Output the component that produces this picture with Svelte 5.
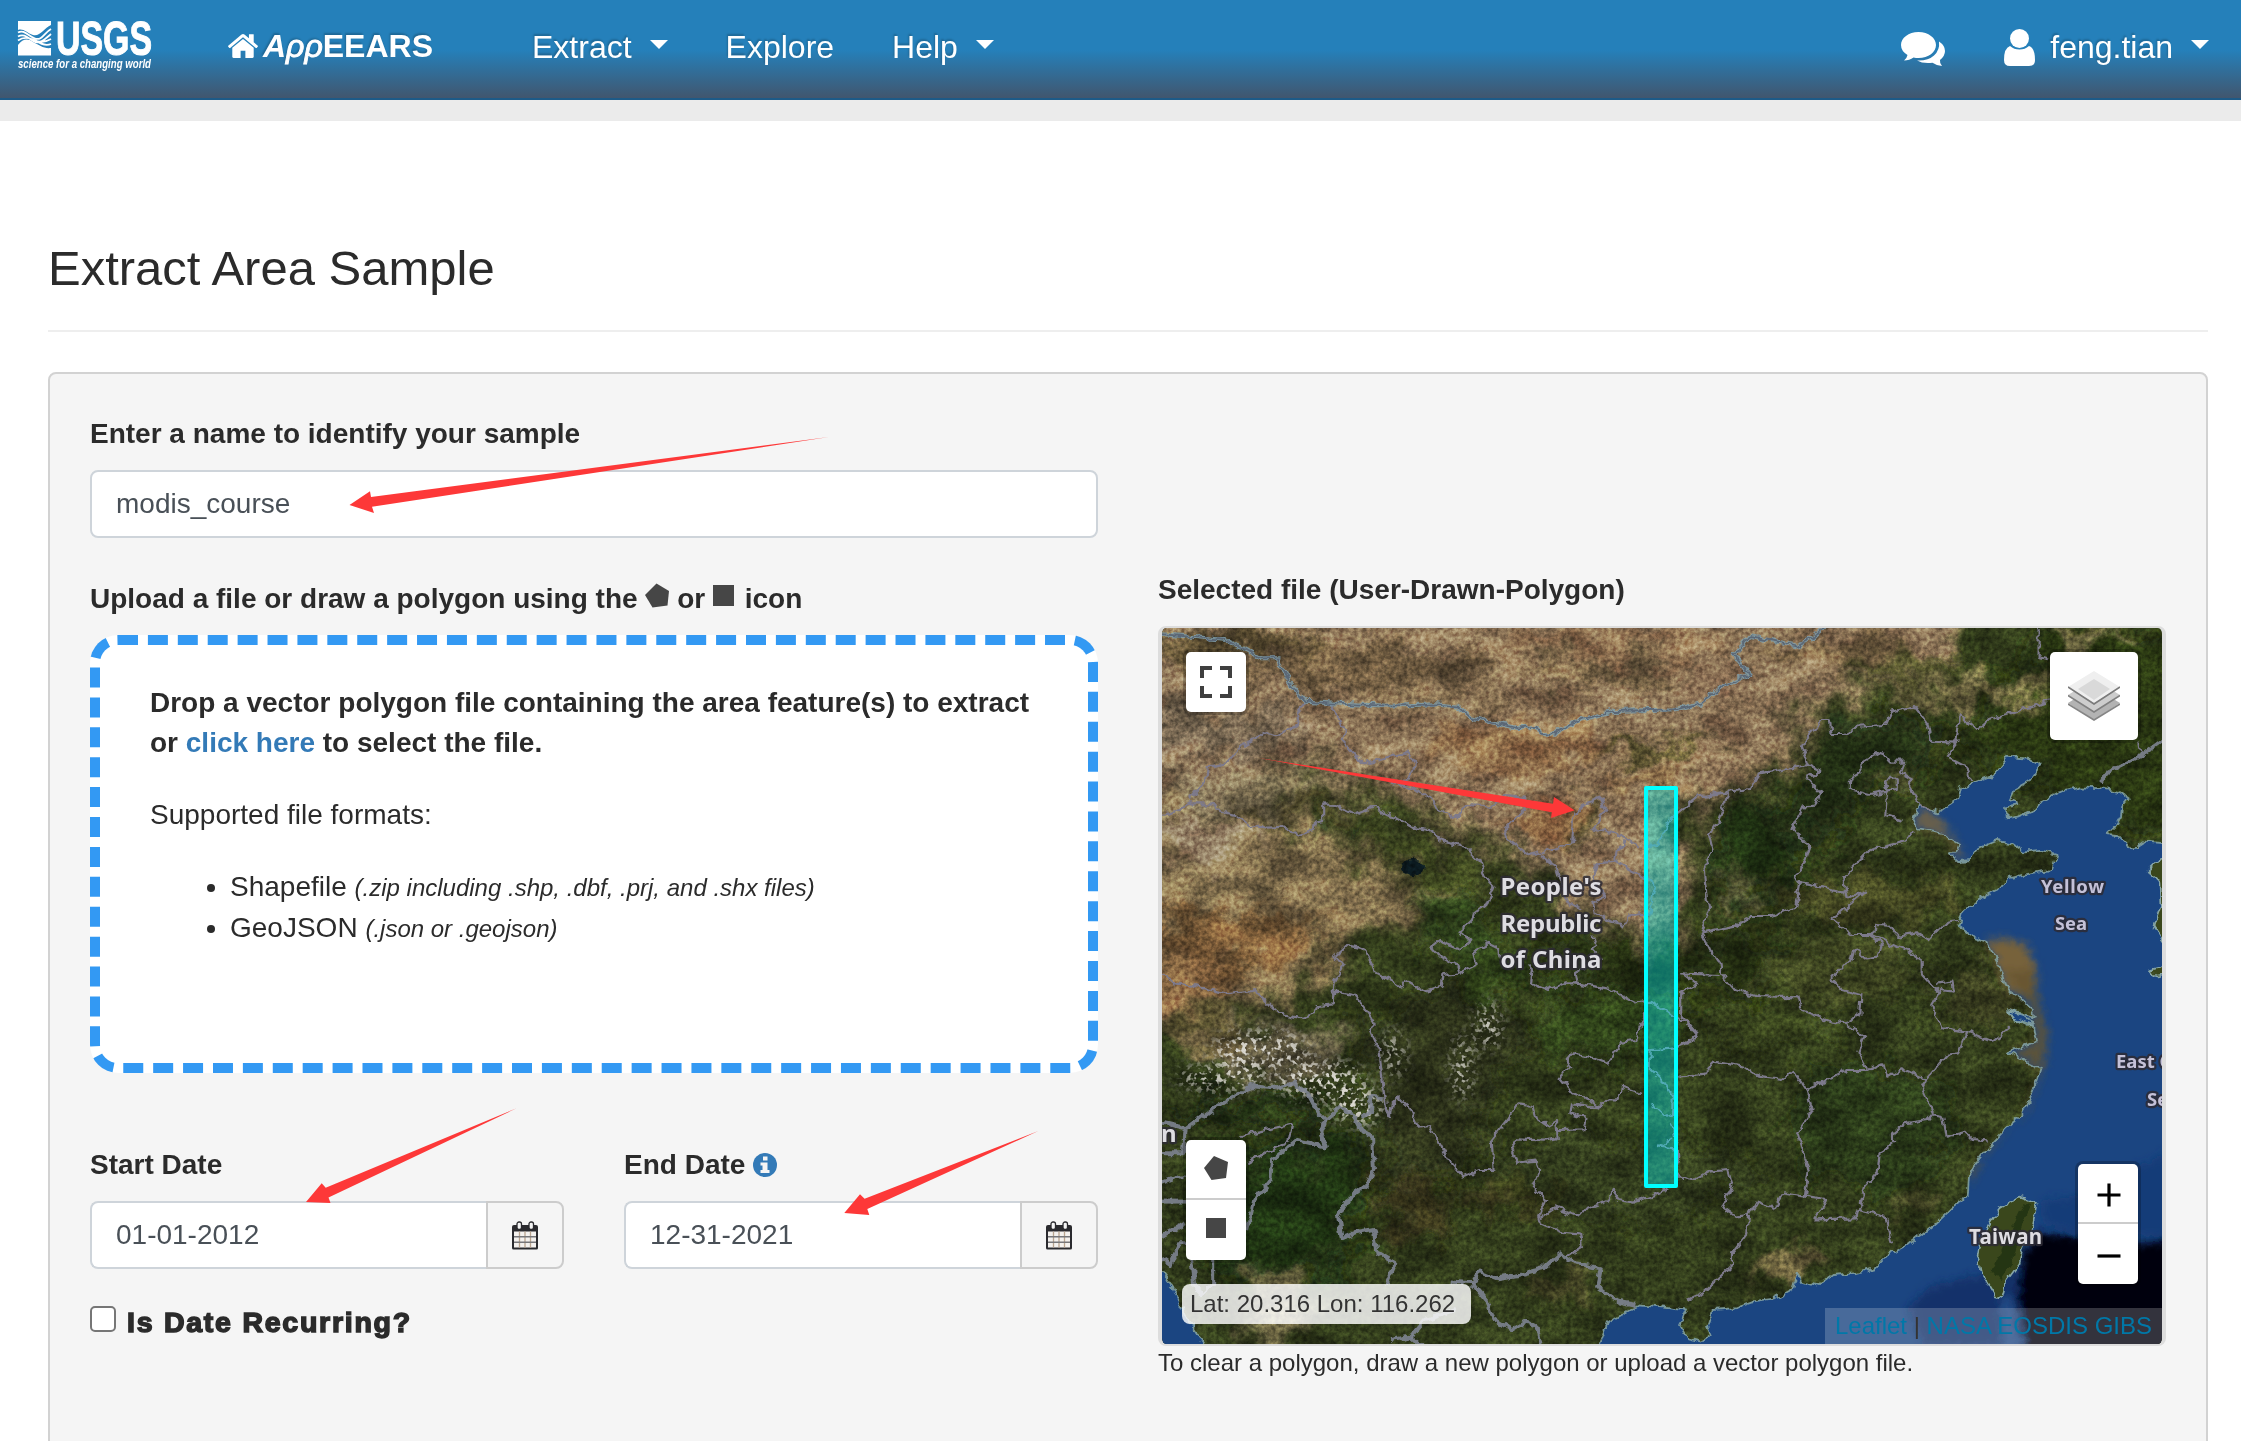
<script>
  // Converts "x,y x,y ..." survey points of one map sheet into map pixels.
  const sheet = (ox, oy, sx, sy) => (pts) =>
    pts
      .trim()
      .split(/\s+/)
      .map((p) => p.split(',').map(Number))
      .map(([x, y]) => `${(ox + x * sx).toFixed(1)},${(oy + y * sy).toFixed(1)}`)
      .join(' ');

  const nw = sheet(-22, -68, 0.3571, 0.3333);
  const ne = sheet(478, -68, 0.3833, 0.3333);
  const sw = sheet(-22, 342, 0.3571, 0.3333);
  const se = sheet(478, 342, 0.3833, 0.3333);
  const all = sheet(-12, -13, 0.6505, 0.4719);

  // Mainland coast, from Korea round to the Gulf of Tonkin.
  const coast = [
    ne('1370,850 1320,845 1300,860 1275,862 1245,825 1220,822 1240,800 1255,770 1258,740 1275,715 1250,695 1205,685 1150,682 1090,697 1050,722 1030,748 985,770 957,775 955,742 990,735 965,715 975,690 1015,665 1043,618 1015,597 960,590 925,645 870,668 838,685 830,715 780,757 728,735 712,780 725,808 790,822 833,855 828,870 808,880 830,903 862,900 885,865 930,843 970,850 1000,875 1045,870 1087,882 1075,930 1040,935 960,955 940,985 890,1012 845,1055 830,1097 870,1130 905,1145 935,1215 955,1280'),
    se('965,65 990,85 1025,120 1030,140 960,120 975,145 1025,165 1033,215 960,245 1000,270 1045,295 1030,350 1015,395 1000,430 960,470 910,530 870,590 858,620 855,680 820,705 775,755 700,825 640,860 610,895 560,910 500,915 460,948 420,935 412,910 400,955 350,985 290,995 240,1015 190,1020 175,1070 185,1095 160,1115 125,1105 105,1060 120,1018 60,1010 0,1003'),
    sw('1380,1015 1310,1060 1285,1135')
  ].join(' ');
  const sea = coast + ' 1010,726';
  const islands = [
    ne('1375,880 1325,935 1355,965 1358,1040 1340,1100 1375,1160'),
    ne('1375,1215 1330,1230 1345,1250 1375,1245'),
    se('990,680 1035,700 1025,760 1000,830 990,880 955,935 945,982 925,975 890,910 880,860 890,800 940,715')
  ];
  const bengal = sw('50,900 90,950 130,1040 165,1100 185,1135 50,1135');
  const shoals = [
    ne('905,1140 960,1135 1005,1155 1032,1210 1035,1290 1005,1310 955,1290'),
    se('950,0 1025,0 1038,90 1062,190 1055,290 1025,370 1005,430 900,540 865,640 862,600 1000,430 1045,295 1000,270 965,245 1033,215 1025,120'),
    ne('735,745 780,765 815,830 845,885 830,900 800,830 730,810 712,780')
  ];

  const provinces = [
    nw('465,430 440,465 445,495 385,525 355,515 290,555 240,610 190,620 185,655 140,720'),
    nw('62,765 100,755 140,730 200,730 215,750 270,765 310,798 360,803 400,800 445,825 485,810 490,785 513,780 513,733 545,735 600,765 655,742 700,765 760,803 810,810 850,845 910,860 950,900 965,950 990,980 970,1035 935,1060 930,1080 895,1115 925,1145 900,1170 835,1143 815,1160 840,1190 890,1220 895,1240 940,1215 930,1175 975,1150 1005,1165 1010,1195'),
    nw('530,430 575,510 565,540 625,610 680,595 750,578 770,610 765,635 740,665 700,668 770,685 820,720 830,745 885,775 915,735 990,740 1020,705 1075,710 1080,745 1020,810 1025,835 1090,885 1150,870 1210,850 1215,775 1240,735 1290,715 1305,750 1270,805 1320,815 1400,860'),
    nw('1120,885 1165,920 1175,960 1200,1030 1235,1045'),
    nw('1360,845 1335,870 1330,905 1280,910 1265,960 1305,1010 1265,1030 1270,1060 1310,1080 1355,1097 1370,1065 1435,1060 1430,1020 1445,980 1425,960 1390,940 1330,908'),
    nw('1270,1130 1280,1160 1265,1170 1290,1195 1220,1240 1225,1270'),
    nw('62,1240 100,1270 160,1280 240,1300 320,1290 390,1360 450,1375'),
    nw('540,1320 545,1270 570,1220 545,1190 580,1155 625,1165 660,1235 735,1280 745,1260 800,1295 845,1280 850,1245 895,1240'),
    sw('450,145 490,130 500,105 540,100 548,65 600,75 640,130 660,165 645,180 670,240 682,360 690,420 700,440 705,405 725,385 760,420 780,470 810,465 865,570 905,620 950,600 990,600 985,510 1030,450 1060,400 1100,405 1105,440 1140,465 1165,450 1170,505 1130,512 1060,508 1040,540 1055,578 1110,572 1120,600 1100,655 1135,690 1115,740 1120,760 1175,785 1235,790 1240,830 1195,860'),
    sw('1090,-10 1100,0 1095,40 1140,60 1190,40 1220,40 1310,55 1385,97 1430,92 1490,135 1530,155 1560,195 1500,235 1430,240 1430,300 1470,340 1492,380 1490,430 1470,440 1430,400'),
    sw('1415,130 1390,210 1350,215 1310,278 1270,262 1210,250 1195,270 1205,290 1175,325 1210,370 1260,390 1285,412 1310,385 1340,385 1350,350 1400,368'),
    sw('1285,412 1210,400 1205,430 1250,445 1245,478 1170,480'),
    sw('1120,745 1165,712 1230,740 1250,715 1310,690 1325,660 1345,690 1380,698 1440,675 1480,655'),
    sw('1490,460 1510,560 1500,600 1520,635'),
    sw('1490,505 1455,530 1500,535'),
    sw('280,500 430,460 420,510 300,580'),
    ne('10,860 45,855 80,780 150,710 210,700 285,690 310,640 370,630 440,615 425,565 430,535 475,480 495,480 500,522 530,522 570,500 640,495 655,455 715,438 750,490 760,545 825,548 835,465 880,510 910,480 1020,440 1070,420'),
    ne('230,700 205,780 180,825 190,870 168,920 180,1050 160,1120 180,1165 210,1210 212,1240 250,1290 300,1308 410,1312'),
    ne('440,615 470,632 435,655 472,700 460,740 425,742 400,800 442,860 425,920 400,945 415,970 405,1040 345,1068 290,1068 250,1100 160,1120'),
    ne('415,970 535,995 530,955 600,870 690,845 715,810'),
    ne('535,995 540,1018 590,992 500,1080 555,1125 610,1125 615,1095 650,1097 675,1130 725,1120 755,1140 800,1085 830,1080'),
    ne('610,1125 650,1150 700,1175 735,1200 735,1240 765,1280 785,1300'),
    ne('600,1125 630,1150 620,1190 590,1195 560,1165 550,1210 530,1215 500,1255 530,1290 575,1305'),
    ne('545,660 575,640 575,610 630,575 650,605 692,605 680,640 712,660 700,675 730,735 760,750'),
    ne('545,660 545,690 600,705 645,695 670,690 670,655 640,660 645,690 640,765 685,782'),
    ne('825,548 797,590 850,620 862,665'),
    ne('1040,207 1040,290 1065,298'),
    ne('1300,545 1305,580'),
    ne('105,1240 205,1245'),
    se('410,82 420,120 500,155 535,160 575,130 578,70'),
    se('535,160 585,200 570,245 595,300 540,300 500,325 435,360 400,300 370,330 310,320 270,290 190,275 175,310 100,320'),
    se('595,300 635,280 645,320 680,295 745,330 800,255 830,250 855,185 790,175 760,110 785,60 820,65 815,35 775,40'),
    se('855,185 920,215 965,175'),
    se('745,330 735,355 765,430 750,450 690,460 660,490 660,520 625,550 620,610 590,650 570,720 565,745 455,748 485,690 430,680 375,670 350,715 305,695 285,735 250,740 215,710 240,640 230,600 180,605 140,630 100,620'),
    se('435,360 450,420 410,490 440,600 430,680'),
    se('765,430 790,435 800,500 850,485 870,510 910,515'),
    se('570,720 640,740 660,820'),
    se('285,735 280,790 240,850 240,890 165,970 125,990'),
    se('110,10 150,45 105,70 105,130 150,190 145,210 100,230')
  ];

  const countries = [
    sw('50,455 130,475 200,420 310,348 370,355 430,340 470,370 500,430 520,450 560,410 600,440 620,480 650,500 655,600 635,645 580,690 555,740 565,805 600,790 655,780 665,850 715,880 690,945'),
    sw('620,440 645,430 645,380 680,385'),
    sw('520,450 505,490 520,530 440,510 370,570 365,630 320,690 300,780'),
    sw('50,550 120,550 125,480'),
    sw('50,695 130,695'),
    sw('50,640 100,620 128,620'),
    sw('50,805 125,760'),
    sw('50,860 85,885 110,820 130,820'),
    sw('870,935 930,940 950,905 1000,925 1060,915 1130,895 1175,850 1220,880 1290,895 1280,950 1340,995 1390,1005'),
    sw('930,940 975,1000 990,1045 1040,1080 1080,1055 1115,1075 1125,1125'),
    sw('700,1110 760,1100 800,1050 885,1020'),
    sw('760,1100 790,1125'),
    sw('145,860 155,950 175,975 205,940 205,860'),
    ne('1203,665 1215,640 1310,585 1370,535')
  ];

  const mongolia =
    nw('55,222 160,232 240,240 290,265 340,295 385,295 420,370 465,425 530,430 600,433 700,437 830,433 890,440 920,470 1060,505 1110,500 1120,520 1150,525 1230,480 1330,453 1500,448') +
    ' ' +
    ne('160,430 210,380 285,345 245,285 285,228 340,240 410,257 450,235 480,200');

  const plains = [
    { c: '#8b7356', o: 1, p: '-40,-60 1260,-60 1230,110 1000,210 980,310 860,380 800,440 830,560 790,690 640,600 540,500 380,380 200,340 -40,420' },
    { c: '#85714f', o: 0.95, p: '-40,360 220,420 300,500 480,620 330,660 260,780 150,840 -40,860' },
    { c: '#3a4220', o: 0.9, p: '300,400 440,440 530,520 530,620 430,600 330,520' },
    { c: '#1f2c11', o: 0.8, p: '620,690 980,680 960,800 720,800 560,760' },
    { c: '#1c2a10', o: 0.8, p: '870,380 990,400 990,600 900,620 860,520' },
    { c: '#1e2b13', o: 0.7, p: '1010,260 1180,210 1220,300 1100,380 1020,500 990,420' },
    { c: '#1d3110', o: 0.8, p: '60,1150 330,1100 330,1250 280,1400 100,1400' },
    { c: '#2b2f17', o: 0.8, p: '330,850 520,780 580,900 480,1150 400,1250 340,1050' },
    { c: '#24330f', o: 0.8, p: '1380,40 1620,30 1620,520 1470,430 1350,350 1240,260' }
  ];

  const patches = [
    [110, 60, 150, 35, '#4a3f24', 0.7],
    [90, 210, 60, 20, '#6b5c4a', 0.7],
    [350, 110, 200, 45, '#5b4a30', 0.65],
    [700, 60, 180, 30, '#8f7050', 0.8],
    [420, 170, 160, 18, '#7d674a', 0.6],
    [700, 120, 140, 25, '#5e4e31', 0.5],
    [860, 150, 60, 40, '#94785a', 0.6],
    [1050, 70, 120, 35, '#7c6546', 0.8],
    [560, 280, 150, 55, '#93704a', 0.8],
    [610, 440, 60, 45, '#977148', 0.9],
    [110, 250, 130, 50, '#6d604f', 0.6],
    [250, 330, 90, 22, '#7d6d4f', 0.7],
    [190, 400, 110, 22, '#5b4c2c', 0.6],
    [120, 370, 110, 40, '#85755a', 0.8],
    [80, 470, 90, 50, '#9a866b', 0.8],
    [200, 560, 160, 45, '#7d6b4b', 0.8],
    [120, 690, 150, 55, '#7b5633', 0.75],
    [60, 780, 80, 50, '#7d5a38', 0.7],
    [770, 285, 90, 22, '#444320', 0.85],
    [780, 350, 75, 25, '#8b6c45', 0.8],
    [672, 430, 14, 50, '#3a3b1c', 0.9],
    [900, 320, 90, 22, '#8e6f52', 0.5],
    [1270, 165, 120, 22, '#8a7a53', 0.8],
    [1160, 110, 90, 30, '#3b4420', 0.7],
    [1440, 45, 60, 18, '#85764f', 0.8],
    [900, 590, 16, 50, '#62583a', 0.7],
    [1120, 350, 25, 14, '#5f5833', 0.7],
    [1090, 600, 140, 55, '#4a4824', 0.7],
    [1060, 760, 130, 60, '#424821', 0.7],
    [1270, 820, 70, 60, '#47492a', 0.6],
    [700, 870, 110, 75, '#31461b', 0.8],
    [520, 740, 70, 60, '#2f4617', 0.8],
    [460, 640, 60, 50, '#29411a', 0.8],
    [960, 870, 90, 60, '#3d4a20', 0.6],
    [400, 1260, 60, 60, '#3b3219', 0.7],
    [560, 1230, 80, 40, '#4a3d1f', 0.5],
    [180, 920, 130, 50, '#6f6350', 0.7],
    [80, 880, 70, 60, '#6a5a37', 0.6],
    [190, 1470, 50, 80, '#7d7350', 0.75],
    [160, 1050, 120, 30, '#1b2513', 0.9],
    [980, 1370, 60, 30, '#7b6947', 0.7],
    [1180, 1260, 50, 30, '#68623a', 0.5],
    [620, 1430, 50, 30, '#574f2b', 0.6],
    [720, 1190, 200, 90, '#333c1b', 0.6],
    [1110, 1080, 130, 130, '#26350f', 0.5],
    [295, 450, 8, 7, '#223036', 1]
  ];

  const snow = [
    [170, 920, 75, 38],
    [260, 985, 70, 40],
    [320, 1040, 40, 40],
    [480, 960, 14, 70],
    [520, 870, 18, 50],
    [375, 930, 14, 50],
    [110, 980, 70, 25]
  ];
</script>

<div class="page">
  <header>
    <svg class="logo" viewBox="0 0 136 54" width="136" height="54">
      <path class="ink" d="M0 1H33V5C26 8 22 17 15 15C9 13 5 8 0 10Z" />
      <path class="ink" d="M0 35.500V25C5 19 9 18 15 22C21 25 26 29 33 28V35.500Z" />
      <path class="wave" d="M0 12.500C6 9 10 16 17 18.500S26 13 33 9M0 16.500C6 13 10 18 16 21.500S28 18 33 14M0 20.500C5 17 9 17 15 19.500S25 23.500 33 19M18 20.500C24 25 28 26 33 24" />
      <text class="usgs" x="38" y="35" textLength="96" lengthAdjust="spacingAndGlyphs">USGS</text>
      <text class="tagline" x="0" y="48" textLength="133" lengthAdjust="spacingAndGlyphs">science for a changing world</text>
    </svg>
    <a class="brand" href="#home">
      <svg viewBox="89 253 1614 1283" width="30" height="24"><path class="ink" d="M1472 992v480q0 26-19 45t-45 19h-384v-384h-256v384h-384q-26 0-45-19t-19-45v-480q0-1 .5-3t.5-3l575-474 575 474q1 2 1 6zm223-69l-62 74q-8 9-21 11h-3q-13 0-21-7l-692-577-692 577q-12 8-24 7-13-2-21-11l-62-74q-8-10-7-23.500t11-21.500l719-599q32-26 76-26t76 26l244 204v-195q0-14 9-23t23-9h192q14 0 23 9t9 23v408l219 182q10 8 11 21.500t-7 23.500z" /></svg>
      <span><i>A</i><i class="rho">ρρ</i>EEARS</span>
    </a>
    <nav>
      <a href="#extract">Extract<b class="caret"></b></a>
      <a href="#explore">Explore</a>
      <a href="#help">Help<b class="caret"></b></a>
    </nav>
    <div class="account">
      <svg class="chat" viewBox="0 0 44 34" width="44" height="34">
        <path class="ink" d="M17.500 0C27.500 0 35 6 35 13S27.500 26 17.500 26Q15 26 12.500 25.500Q8.500 28.500 3 28.500Q6 26 6.500 23Q0 19 0 13C0 6 7.500 0 17.500 0Z" />
        <path class="ink" d="M38 9.500Q44 13.500 44 19Q44 24 39 28Q38.500 31 41 34Q36 34 31.500 30.800Q22 32 16 28.500Q27 29 33 23.500Q39 18 38 9.500Z" />
      </svg>
      <svg class="user" viewBox="0 0 31 37" width="31" height="37">
        <circle class="ink" cx="15.500" cy="9.500" r="9.500" />
        <path class="ink" d="M6 17Q10 20.500 15.500 20.500T25 17Q31 19 31 31Q31 37 25 37H6Q0 37 0 31Q0 19 6 17Z" />
      </svg>
      <span>feng.tian</span><b class="caret"></b>
    </div>
  </header>
  <div class="strip"></div>

  <main>
    <h1>Extract Area Sample</h1>
    <section class="panel">
      <div class="column">
        <div class="label">Enter a name to identify your sample</div>
        <div class="field name">modis_course</div>
        <div class="label low upload">
          Upload a file or draw a polygon using the
          <svg viewBox="0 0 24 24" width="24" height="25"><path class="shape" d="M11.500 0L24 7.500L22.500 22L7.500 24L0 11.500Z" /></svg>
          or
          <svg class="square" viewBox="0 0 21 21" width="21" height="21"><path class="shape" d="M0 0H21V21H0Z" /></svg>
          icon
        </div>
        <div class="drop">
          <p class="strong">Drop a vector polygon file containing the area feature(s) to extract<br />or <a href="#file">click here</a> to select the file.</p>
          <p>Supported file formats:</p>
          <ul>
            <li>Shapefile <em>(.zip including .shp, .dbf, .prj, and .shx files)</em></li>
            <li>GeoJSON <em>(.json or .geojson)</em></li>
          </ul>
        </div>
        <div class="dates">
          {#each [{ name: 'Start Date', value: '01-01-2012' }, { name: 'End Date', value: '12-31-2021', info: true }] as d}
            <div class="date">
              <div class="label low">
                {d.name}
                {#if d.info}
                  <svg class="info" viewBox="0 0 24 24" width="24" height="24">
                    <circle cx="12" cy="12" r="12" />
                    <path d="M10 3.500H14.500V7.500H10ZM7.500 9.500H14.500V17H16.500V20H7.500V17H9.500V12.500H7.500Z" />
                  </svg>
                {/if}
              </div>
              <div class="group">
                <div class="field">{d.value}</div>
                <div class="addon">
                  <svg viewBox="0 0 26 29" width="26" height="29">
                    <path d="M2 4H24Q26 4 26 6V27Q26 28.500 24.500 28.500H1.500Q0 28.500 0 27V6Q0 4 2 4Z" fill="#2a2a2e" />
                    <path d="M2 10.500H24V26.500H2Z" fill="#f4f1ee" />
                    <path d="M7.500 10.500V26.500M13 10.500V26.500M18.500 10.500V26.500" stroke="#b9a48f" stroke-width="1.300" />
                    <path d="M2 15.800H24M2 21.300H24" stroke="#77777a" stroke-width="1.500" />
                    <rect x="5" y="1" width="4.500" height="7.500" rx="2" fill="#f4f4f4" stroke="#2a2a2e" stroke-width="1.300" />
                    <rect x="17" y="1" width="4.500" height="7.500" rx="2" fill="#f4f4f4" stroke="#2a2a2e" stroke-width="1.300" />
                  </svg>
                </div>
              </div>
            </div>
          {/each}
        </div>
        <div class="recurring"><span class="box"></span><span class="heavy">Is Date Recurring?</span></div>
      </div>

      <div class="column right">
        <div class="label low">Selected file (User-Drawn-Polygon)</div>
        <div class="map">
          <svg class="tiles" viewBox="0 0 1000 716" width="1000" height="716">
            <defs>
              <filter id="soft" x="-20%" y="-20%" width="140%" height="140%"><feGaussianBlur stdDeviation="12" /></filter>
              <filter id="softer" x="-40%" y="-40%" width="180%" height="180%"><feGaussianBlur stdDeviation="12" /></filter>
              <filter id="edge" x="-20%" y="-20%" width="140%" height="140%"><feGaussianBlur stdDeviation="4" /></filter>
              <filter id="wobble" x="0" y="0" width="1000" height="716" filterUnits="userSpaceOnUse" color-interpolation-filters="sRGB">
                <feTurbulence type="fractalNoise" baseFrequency="0.12" numOctaves="2" seed="4" />
                <feDisplacementMap in="SourceGraphic" scale="8" xChannelSelector="R" yChannelSelector="G" />
              </filter>
              <filter id="drift" x="0" y="0" width="1000" height="716" filterUnits="userSpaceOnUse" color-interpolation-filters="sRGB">
                <feTurbulence type="fractalNoise" baseFrequency="0.03" numOctaves="5" seed="9" />
                <feDisplacementMap in="SourceGraphic" scale="75" xChannelSelector="R" yChannelSelector="G" />
              </filter>
              <filter id="grain" x="0" y="0" width="1000" height="716" filterUnits="userSpaceOnUse" color-interpolation-filters="sRGB">
                <feTurbulence type="fractalNoise" baseFrequency="0.22" numOctaves="3" seed="2" />
                <feColorMatrix values="1.700 0 0 0 -0.350 1.700 0 0 0 -0.350 1.700 0 0 0 -0.350 0 0 0 0 1" />
              </filter>
              <filter id="relief" x="0" y="0" width="1000" height="716" filterUnits="userSpaceOnUse" color-interpolation-filters="sRGB">
                <feTurbulence type="fractalNoise" baseFrequency="0.022 0.036" numOctaves="5" seed="11" />
                <feColorMatrix values="2.200 0 0 0 -0.600 2.200 0 0 0 -0.600 2.200 0 0 0 -0.600 0 0 0 0 1" />
              </filter>
              <filter id="flakes" x="0" y="0" width="1000" height="716" filterUnits="userSpaceOnUse" color-interpolation-filters="sRGB">
                <feTurbulence type="fractalNoise" baseFrequency="0.200" numOctaves="2" seed="7" result="n" />
                <feColorMatrix in="n" values="0 0 0 0 0.860 0 0 0 0 0.850 0 0 0 0 0.820 7 0 0 0 -3.600" result="w" />
                <feGaussianBlur in="SourceAlpha" stdDeviation="8" result="m" />
                <feComposite in="w" in2="m" operator="in" />
              </filter>
            </defs>
            <rect width="1000" height="716" fill="#303a1a" />
            <g filter="url(#drift)">
              <g filter="url(#soft)">
                {#each plains as a}<polygon points={all(a.p)} fill={a.c} fill-opacity={a.o} />{/each}
              </g>
              <g filter="url(#softer)" transform="matrix(.6505 0 0 .4719 -12 -13)">
                {#each patches as [cx, cy, rx, ry, c, o]}<ellipse {cx} {cy} {rx} {ry} fill={c} fill-opacity={o} />{/each}
              </g>
            </g>
            <ellipse cx="251" cy="240" rx="12" ry="8" fill="#0c1c22" filter="url(#wobble)" />
            <rect class="relief" width="1000" height="716" filter="url(#relief)" />
            <rect class="grain" width="1000" height="716" filter="url(#grain)" />
            <g filter="url(#flakes)">
              {#each snow as [cx, cy, rx, ry]}<ellipse cx={cx * 0.6505 - 12} cy={cy * 0.4719 - 13} rx={rx * 0.65} ry={ry * 0.47} />{/each}
            </g>
            <g filter="url(#wobble)">
              <polygon points={sea} fill="#1b4581" />
              <polygon points={bengal} fill="#1b4581" />
              <g filter="url(#edge)">
                <polygon points={shoals[0]} fill="#77623a" />
                <polygon points={shoals[1]} fill="#66552f" fill-opacity=".85" />
                <polygon points={shoals[2]} fill="#7a663d" fill-opacity=".8" />
                <polygon points={se('1050,690 1150,680 1390,540 1390,800 1130,790 1050,760')} fill="#153873" fill-opacity=".7" />
                <polygon points={se('700,1010 760,950 860,920 1000,900 1000,1130 740,1130')} fill="#0e2a5f" fill-opacity=".7" />
                <polygon points={se('1410,800 1280,825 1130,800 1045,785 1000,850 985,960 1010,1170 1410,1170')} fill="#01030f" />
                <polygon points={se('940,985 970,985 990,1140 950,1140')} fill="#27528e" fill-opacity=".8" />
              </g>
              {#each islands as i}<polygon class="island" points={i} />{/each}
              <polygon points={se('1000,700 1020,705 985,800 970,880 940,930 920,900 960,800')} fill="#1b2d10" fill-opacity=".7" />
              <polyline class="pale" points={coast} />
              <polyline class="pale" points={sw('55,900 90,950 130,1040 165,1100 185,1135')} />
              <polyline class="pale" points={se('960,120 1000,135 1030,160 1010,165 975,145 960,120')} />
              {#each provinces as p}<polyline class="province" points={p} />{/each}
              {#each countries as p}<polyline class="country" points={p} />{/each}
              <polyline class="north" points={mongolia} />
              <polyline class="north core" points={mongolia} />
            </g>
            <g class="names">
              <text x="389" y="267" textLength="101">People's</text>
              <text x="389" y="303.500" textLength="101">Republic</text>
              <text x="389" y="340" textLength="101">of China</text>
              <text class="state" x="843.500" y="616" textLength="73">Taiwan</text>
              <text class="water" x="910.500" y="264.500" textLength="63">Yellow</text>
              <text class="water" x="909" y="302" textLength="32">Sea</text>
              <text class="water start" x="954" y="440">East China</text>
              <text class="water start" x="985" y="478">Sea</text>
              <text class="start" x="-1" y="514">n</text>
              <text class="start" x="284" y="738">Laos</text>
              <text class="water start" x="700" y="732">Luzon Strait</text>
            </g>
            <rect class="sample" x="484" y="160" width="30" height="398" />
          </svg>
          <div class="control full"><svg viewBox="0 0 32 32" width="32" height="32"><path d="M2 12V2H12M20 2H30V12M30 20V30H20M12 30H2V20" /></svg></div>
          <div class="control layers">
            <svg viewBox="0 0 52 50" width="52" height="50">
              <path d="M0 32L26 16L52 32L26 49Z" fill="#b3b3b3" /><path d="M0 33L26 49L52 33" fill="none" stroke="#858585" />
              <path d="M0 24L26 8L52 24L26 41Z" fill="#cdcdcd" /><path d="M0 24.500L26 41L52 24.500" fill="none" stroke="#808080" />
              <path d="M0 16L26 0L52 16L26 32Z" fill="#efefef" /><path d="M10 18L26 8L42 18L26 29Z" fill="#d9d9d9" /><path d="M0 16L26 33L52 16" fill="none" stroke="#7b7b7b" />
            </svg>
          </div>
          <div class="control draw">
            <div><svg viewBox="0 0 24 24" width="24" height="24"><path class="shape" d="M10 0L24 6L22 22L7.500 24L0 12Z" /></svg></div>
            <div><svg viewBox="0 0 20 20" width="20" height="20"><path class="shape" d="M0 0H20V20H0Z" /></svg></div>
          </div>
          <div class="control zoom">
            <div><svg viewBox="0 0 24 24" width="24" height="24"><path d="M12 0.500V23.500M0.500 12H23.500" /></svg></div>
            <div><svg viewBox="0 0 24 24" width="24" height="24"><path d="M0.500 12H23.500" /></svg></div>
          </div>
          <div class="position">Lat: 20.316 Lon: 116.262</div>
          <div class="credit"><a href="#leaflet">Leaflet</a> | <a href="#gibs">NASA EOSDIS GIBS</a></div>
        </div>
        <div class="hint">To clear a polygon, draw a new polygon or upload a vector polygon file.</div>
      </div>
    </section>
  </main>

  <svg class="arrows" viewBox="0 0 2241 1441" width="2241" height="1441">
    <polygon points="349.500,505 370,491.300 371,497 829,437 372,506.700 374,513" />
    <polygon points="306,1202 321.700,1183.300 325.700,1187.700 516.500,1108.300 328.500,1197.500 330.500,1203" />
    <polygon points="844.300,1213 860,1194.300 864.600,1198.700 1038.300,1131 867.300,1209 869.300,1215" />
    <polygon points="1574.600,810.300 1554,797 1553,803.700 1259,758 1551.800,812.300 1551,818" />
  </svg>
</div>

<style>
  :global(body) {
    margin: 0;
    background: #fff;
  }
  .page {
    position: relative;
    width: 2241px;
    height: 1441px;
    overflow: hidden;
    font-family: 'Liberation Sans', Arial, sans-serif;
    font-size: 28px;
    line-height: 40px;
    color: #2b2b2b;
    background: #fff;
  }
  * {
    box-sizing: border-box;
  }
  a {
    color: #337ab7;
    text-decoration: none;
  }
  header {
    display: flex;
    align-items: center;
    height: 100px;
    padding: 0 32px 4px 18px;
    border-bottom: 2px solid #1d5a87;
    background: linear-gradient(#2580ba 0, #2580ba 50px, #41566e 98px);
    color: #fff;
    font-size: 32px;
    text-shadow: -1px -2px 2px rgba(0, 0, 0, 0.2);
  }
  header a {
    color: #fff;
  }
  .ink {
    fill: #fff;
  }
  .wave {
    fill: none;
    stroke: #fff;
    stroke-width: 1.8;
  }
  .logo {
    overflow: visible;
    margin-right: 74px;
  }
  .usgs {
    fill: #fff;
    stroke: #fff;
    stroke-width: 1;
    font-size: 48px;
    font-weight: bold;
    text-shadow: none;
  }
  .tagline {
    fill: #fff;
    font-size: 13.5px;
    font-weight: bold;
    font-style: italic;
    text-shadow: none;
  }
  .brand {
    display: flex;
    align-items: center;
    gap: 5px;
    width: 304px;
    font-weight: bold;
    padding-bottom: 3px;
  }
  .rho {
    font-weight: normal;
    -webkit-text-stroke: 0.9px #fff;
  }
  nav {
    display: flex;
    gap: 58px;
    flex: 1;
  }
  nav a {
    display: flex;
    align-items: center;
  }
  .caret {
    margin: -5px 0 0 18px;
    border: 9.5px solid transparent;
    border-top-color: #fff;
    border-bottom: 0;
  }
  .account {
    display: flex;
    align-items: center;
  }
  .chat {
    margin: 4px 59px 0 0;
  }
  .user {
    margin-right: 15px;
  }
  .strip {
    height: 21px;
    background: #ebebeb;
  }
  main {
    padding: 117px 33px 0 48px;
  }
  h1 {
    margin: 0;
    height: 94px;
    border-bottom: 2px solid #eee;
    font-size: 49px;
    font-weight: normal;
    line-height: 60px;
  }
  .panel {
    display: flex;
    gap: 60px;
    margin-top: 40px;
    height: 1100px;
    padding: 40px;
    border: 2px solid #d2d2d2;
    border-radius: 8px;
    background: #f5f5f5;
  }
  .column {
    width: 1008px;
    flex: none;
  }
  .right {
    padding-top: 155px;
  }
  .label {
    height: 40px;
    font-weight: bold;
    white-space: nowrap;
  }
  .low {
    line-height: 42px;
  }
  .field {
    flex: 1;
    height: 68px;
    padding: 0 24px;
    border: 2px solid #ced4da;
    border-radius: 8px;
    background: #fff;
    color: #495057;
    line-height: 63px;
  }
  .name {
    margin: 16px 0 40px;
  }
  .shape {
    fill: #464646;
  }
  .upload svg {
    vertical-align: 0;
  }
  .upload .square {
    margin: 0 3px 0 0;
    vertical-align: 2px;
  }
  .drop {
    height: 438px;
    margin: 17px 0 71px;
    padding: 38px 40px 0 50px;
    border: 10px dashed #3399f3;
    border-radius: 28px;
    background: #fff;
    white-space: nowrap;
  }
  .drop p {
    margin: 0 0 32px;
  }
  .strong {
    font-weight: bold;
  }
  ul {
    margin: 0;
    padding-left: 80px;
  }
  em {
    font-size: 24px;
  }
  .dates {
    display: flex;
    gap: 60px;
  }
  .date {
    flex: 1;
  }
  .info {
    vertical-align: -3px;
  }
  .info circle {
    fill: #337ab7;
  }
  .info path {
    fill: #f5f5f5;
  }
  .group {
    display: flex;
    margin-top: 17px;
  }
  .group .field {
    border-radius: 8px 0 0 8px;
    border-right: 0;
  }
  .addon {
    display: flex;
    align-items: center;
    justify-content: center;
    width: 78px;
    height: 68px;
    border: 2px solid #ccc;
    border-radius: 0 8px 8px 0;
    background: #f5f5f5;
  }
  .recurring {
    display: flex;
    margin-top: 33px;
  }
  .box {
    width: 26px;
    height: 26px;
    margin: 4px 11px 0 0;
    border: 2px solid #767676;
    border-radius: 5px;
    background: #fff;
  }
  .heavy {
    font-weight: bold;
    font-size: 28.5px;
    letter-spacing: 1.75px;
    -webkit-text-stroke: 1.5px #2b2b2b;
  }
  .map {
    position: relative;
    height: 720px;
    margin-top: 17px;
    border: 2px solid #ddd;
    border-width: 2px 4px;
    border-radius: 8px;
    overflow: hidden;
  }
  .tiles {
    display: block;
  }
  .relief {
    mix-blend-mode: overlay;
    opacity: 0.28;
  }
  .grain {
    mix-blend-mode: overlay;
    opacity: 0.32;
  }
  polyline {
    fill: none;
    stroke-linejoin: round;
  }
  .province {
    stroke: #7d7a8b;
    stroke-width: 2.2;
  }
  .country {
    stroke: #7d8390;
    stroke-width: 4;
    stroke-opacity: 0.9;
  }
  .north {
    stroke: #7f9fac;
    stroke-width: 4;
    stroke-opacity: 0.85;
  }
  .core {
    stroke: #565f6e;
    stroke-width: 1.8;
  }
  .pale {
    stroke: #86a5a6;
    stroke-width: 1.8;
    stroke-opacity: 0.85;
  }
  .island {
    fill: #3a471c;
    stroke: #86a5a6;
    stroke-width: 1.7;
  }
  .names text {
    font-family: 'Noto Sans', sans-serif;
    font-size: 24px;
    font-weight: 700;
    text-anchor: middle;
    fill: #dedde2;
    stroke: rgba(45, 42, 52, 0.85);
    stroke-width: 4.5;
    stroke-linejoin: round;
    paint-order: stroke;
  }
  .names .state {
    font-size: 20.5px;
  }
  .names .water {
    font-size: 18.5px;
    fill: #c4c1d8;
  }
  .names .start {
    text-anchor: start;
  }
  .sample {
    fill: rgba(0, 255, 255, 0.36);
    stroke: #0ff;
    stroke-width: 4;
    stroke-linejoin: round;
  }
  .control {
    position: absolute;
    display: flex;
    align-items: center;
    justify-content: center;
    border-radius: 5px;
    background: #fff;
    box-shadow: 0 0 0 3px rgba(0, 0, 0, 0.22);
  }
  .full {
    top: 24px;
    left: 24px;
    width: 60px;
    height: 60px;
  }
  .full path {
    fill: none;
    stroke: #3f3f3f;
    stroke-width: 4;
  }
  .layers {
    top: 24px;
    right: 24px;
    width: 88px;
    height: 88px;
  }
  .layers path {
    stroke-width: 1.5;
  }
  .draw,
  .zoom {
    flex-direction: column;
    width: 60px;
    height: 120px;
  }
  .draw {
    left: 24px;
    top: 512px;
  }
  .zoom {
    right: 24px;
    top: 536px;
  }
  .draw div,
  .zoom div {
    display: flex;
    align-items: center;
    justify-content: center;
    width: 60px;
    height: 60px;
    padding-bottom: 4px;
  }
  .zoom div {
    padding: 3px 0 0 2px;
  }
  .draw div:first-child,
  .zoom div:first-child {
    border-bottom: 2px solid #ccc;
  }
  .draw div:first-child {
    padding-bottom: 2px;
  }
  .zoom path {
    fill: none;
    stroke: #000;
    stroke-width: 3.2;
  }
  .position {
    position: absolute;
    left: 20px;
    top: 656px;
    width: 289px;
    height: 40px;
    padding-left: 8px;
    border-radius: 8px;
    background: rgba(255, 255, 255, 0.82);
    color: #333;
    font-size: 24px;
    line-height: 39px;
    white-space: nowrap;
  }
  .credit {
    position: absolute;
    right: 0;
    bottom: 0;
    height: 36px;
    padding: 0 10px;
    background: rgba(255, 255, 255, 0.2);
    color: #333;
    font-size: 24px;
    line-height: 35px;
    white-space: nowrap;
  }
  .credit a {
    color: #0078a8;
  }
  .hint {
    font-size: 24px;
    line-height: 34px;
    white-space: nowrap;
  }
  .arrows {
    position: absolute;
    inset: 0;
    pointer-events: none;
  }
  .arrows polygon {
    fill: #fd3838;
  }
</style>
